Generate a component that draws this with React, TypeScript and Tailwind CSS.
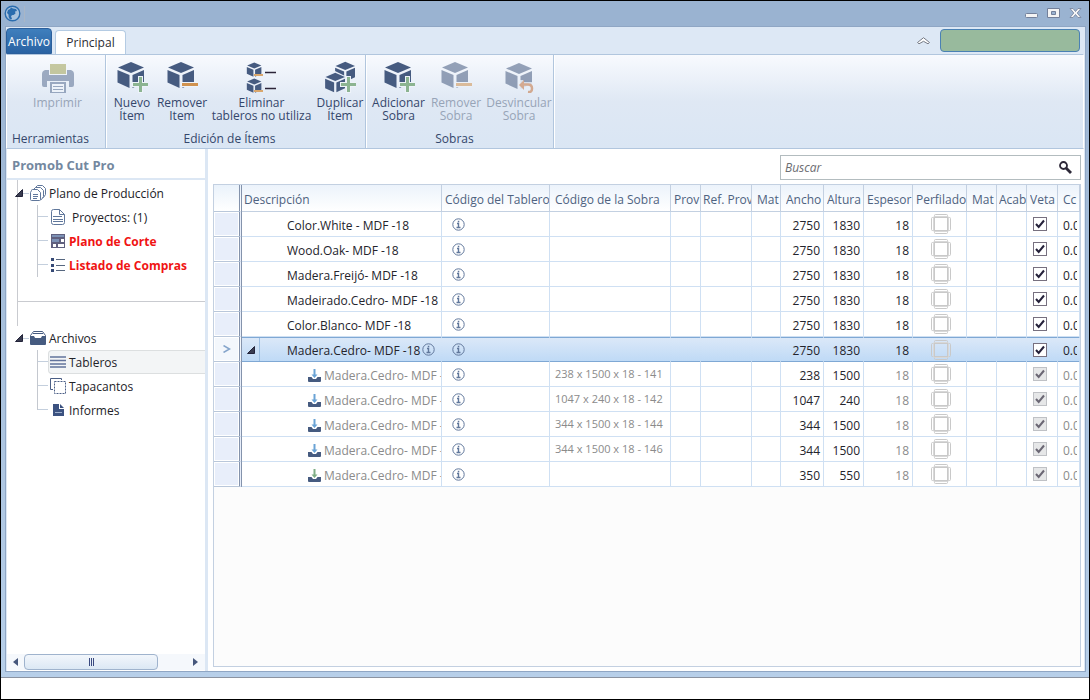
import React, { useState } from 'react';
import clsx from 'clsx';

interface IconProps {
  className?: string;
}

const Cube: React.FC<{ x?: number; y?: number; scale?: number }> = ({ x = 0, y = 0, scale = 1 }) => (
  <g transform={`translate(${x} ${y}) scale(${scale})`} fill="#465b80">
    <polygon points="15,1 28,6.5 15,12 2,6.5" />
    <polygon points="1.5,9 13.5,14 13.5,27 1.5,21.5" />
    <polygon points="16.5,14 28,9 28,21.5 16.5,27" />
  </g>
);

const Plus = () => (
  <>
    <path d="M22 15h5v6h6v5h-6v6h-5v-6h-6v-5h6z" fill="#eef3fa" />
    <path d="M23 16h3v6h6v3h-6v6h-3v-6h-6v-3h6z" fill="#8cb491" />
  </>
);

const PrintIcon = () => (
  <svg width="32" height="32" viewBox="0 0 32 32">
    <rect x="8" y="3" width="16" height="10" fill="#a0a255" />
    <path d="M3 9h4v5h18V9h4q3 1 3 4v11q0 2-2 2h-3v-6H5v6H2q-2 0-2-2V13q0-3 3-4z" fill="#5a6f93" />
    <path d="M9 22h14v10H9z" fill="#f4f7fc" stroke="#5a6f93" strokeWidth="2" />
    <path d="M11 25.500h10M11 28.500h10" stroke="#5a6f93" />
  </svg>
);

const CubeAddIcon = () => (
  <svg width="32" height="32" viewBox="0 0 32 32"><Cube /><Plus /></svg>
);

const CubeRemoveIcon = () => (
  <svg width="32" height="32" viewBox="0 0 32 32">
    <Cube />
    <path d="M15 21h17v5H15z" fill="#eef3fa" />
    <path d="M16 22h16v3H16z" fill="#d0924f" />
  </svg>
);

const CubeListIcon = () => (
  <svg width="32" height="32" viewBox="0 0 32 32">
    <Cube x={0} y={1} scale={0.55} />
    <Cube x={0} y={17} scale={0.55} />
    <path d="M8 13h9v2H8zM8 29h9v2H8z" fill="#d9a76d" />
    <path d="M19 11.500h11M19 27.500h11" stroke="#2c2438" strokeWidth="1.500" />
  </svg>
);

const CubeDuplicateIcon = () => (
  <svg width="32" height="32" viewBox="0 0 32 32">
    <Cube x={10} y={0} scale={0.75} />
    <path d="M0 16L11 10l12 6v10l-12 6-11-6z" fill="#eaf0f9" />
    <Cube x={0} y={11} scale={0.75} />
    <Plus />
  </svg>
);

const CubeUnlinkIcon = () => (
  <svg width="32" height="32" viewBox="0 0 32 32">
    <Cube x={1} y={1} />
    <path d="M17 19h3l1 2h9v11H17z" fill="#e6edf7" opacity="0.8" />
    <path d="M19 23.500h6q4 0 4 4t-4 3.500" fill="none" stroke="#c4733d" strokeWidth="2.500" />
    <path d="M16 24l5-5v10z" fill="#c4733d" />
  </svg>
);

const InfoIcon: React.FC<IconProps> = ({ className }) => (
  <svg width="13" height="13" viewBox="0 0 13 13" className={className}>
    <circle cx="6.500" cy="6.500" r="5.700" fill="none" stroke="#60779b" />
    <path d="M5 5.500h1.500v4M4.500 9.500h4M5.800 3.500h1.500" fill="none" stroke="#60779b" strokeWidth="1.400" />
  </svg>
);

const ImportIcon: React.FC<{ color: string }> = ({ color }) => (
  <svg width="13" height="14" viewBox="0 0 13 14" className="shrink-0">
    <path d="M0 8h3.500l1.500 2h3l1.500-2H13v4q0 1-1 1H1q-1 0-1-1z" fill="#465b80" />
    <path d="M5.500 0h2v5.500h2L6.500 9 3.500 5.500h2z" fill={color} />
  </svg>
);

const EdgeIcon = () => (
  <svg width="20" height="20" viewBox="0 0 20 20" className="ml-[18px] block" fill="none" stroke="#c9c9c9">
    <rect x="3.500" y="0.500" width="13" height="19" rx="1" />
    <rect x="0.500" y="3.500" width="19" height="13" rx="1" />
    <rect x="2.500" y="2.500" width="15" height="15" rx="1" stroke="#d8d8d8" />
  </svg>
);

const ExpanderIcon: React.FC<IconProps> = ({ className }) => (
  <svg width="8" height="8" viewBox="0 0 8 8" className={className}>
    <polygon points="7.500,0.500 7.500,7.500 0.500,7.500" fill="#3a3c50" stroke="#23243a" />
  </svg>
);

const SheetsIcon = () => (
  <svg width="16" height="17" viewBox="0 0 16 17" fill="#fff" stroke="#60779b">
    <path d="M5.500 2.500l2-2h5l3 3v6l-2 3h-8z" />
    <path d="M3.500 4.500l2-2h5l3 3v6l-2 3h-8z" />
    <path d="M1.500 5.500q0-1 1-1h5l3 3v7q0 1-1 1h-8q-1 0-1-1v-7z" />
    <path d="M3 9.500h5M3 11.500h5M3 13.500h4" />
  </svg>
);

const SheetIcon = () => (
  <svg width="16" height="16" viewBox="0 0 16 16" fill="none" stroke="#60779b">
    <path d="M1.500 2.500q0-2 2-2h6l5 5v8q0 2-2 2h-9q-2 0-2-2z" fill="#fff" />
    <path d="M9.500 0.500v5h5M3 7.500h9M3 10.500h10M3 12.500h10" />
  </svg>
);

const CutPlanIcon = () => (
  <svg width="16" height="16" viewBox="0 0 16 16">
    <rect x="1" y="1" width="14" height="14" fill="#60607e" />
    <path d="M2 3h12" stroke="#7c91b5" strokeWidth="2" />
    <path d="M11 6h3v3h-3zM3 11h3v3H3zM8 11h6v3H8z" fill="#fff" />
    <path d="M2 6h7v3H2z" fill="#7c91b5" />
  </svg>
);

const ListIcon = () => (
  <svg width="16" height="16" viewBox="0 0 16 16">
    <path d="M1 1h3v3H1zM1 7h3v3H1zM1 12h3v3H1z" fill="#364a76" />
    <path d="M6 2.500h9M6 8.500h9M6 13.500h9" stroke="#56667f" />
  </svg>
);

const DrawerIcon = () => (
  <svg width="16" height="14" viewBox="0 0 16 14">
    <path d="M3.500 0.500h9l3 4v3h-15v-3z" fill="#fff" stroke="#465b80" />
    <path d="M3 2.500h10" stroke="#465b80" />
    <path d="M0 5h4q1 3 4 3t4-3h4v8q0 1-1 1H1q-1 0-1-1z" fill="#465b80" />
  </svg>
);

const BoardsIcon = () => (
  <svg width="16" height="12" viewBox="0 0 16 12">
    <path d="M0 1h16M0 4.500h16M0 8h16M0 11h16" stroke="#63749c" strokeWidth="1.500" />
  </svg>
);

const EdgeBandIcon = () => (
  <svg width="16" height="16" viewBox="0 0 16 16" fill="none" stroke="#4b5f86">
    <path d="M11.500 2V0.500h-11v11H3" />
    <rect x="4.500" y="3.500" width="11" height="12" strokeDasharray="2 1" />
  </svg>
);

const ReportIcon = () => (
  <svg width="16" height="14" viewBox="0 0 16 14">
    <path d="M3 1h6v5h5v7H3z" fill="#3c5280" />
    <path d="M10 1l4 4h-4z" fill="#3c5280" />
    <path d="M5 9.500h7" stroke="#9fb0cc" />
  </svg>
);

const ribbonGroups = [
  {
    name: 'Herramientas',
    padding: 'pl-[3px]',
    buttons: [{ lines: ['Imprimir'], icon: <PrintIcon />, width: 'w-[95px]', disabled: true }],
  },
  {
    name: 'Edición de Ítems',
    padding: 'pl-0.5',
    buttons: [
      { lines: ['Nuevo', 'Ítem'], icon: <CubeAddIcon />, width: 'w-[48px]' },
      { lines: ['Remover', 'Item'], icon: <CubeRemoveIcon />, width: 'w-[52px]' },
      { lines: ['Eliminar', 'tableros no utiliza'], icon: <CubeListIcon />, width: 'w-[107px]' },
      { lines: ['Duplicar', 'Ítem'], icon: <CubeDuplicateIcon />, width: 'w-[50px]' },
    ],
  },
  {
    name: 'Sobras',
    padding: 'pl-1',
    buttons: [
      { lines: ['Adicionar', 'Sobra'], icon: <CubeAddIcon />, width: 'w-[57px]' },
      { lines: ['Remover', 'Sobra'], icon: <CubeRemoveIcon />, width: 'w-[58px]', disabled: true },
      { lines: ['Desvincular', 'Sobra'], icon: <CubeUnlinkIcon />, width: 'w-[68px]', disabled: true },
    ],
  },
];

const columns = [
  { label: 'Descripción', width: 'w-[200px]', margin: 'ml-0.5' },
  { label: 'Código del Tablero', width: 'w-[108px]', margin: 'ml-[3px]' },
  { label: 'Código de la Sobra', width: 'w-[121px]', margin: 'ml-[5px]' },
  { label: 'Prov', width: 'w-[30px]', margin: 'ml-[3px]' },
  { label: 'Ref. Prov', width: 'w-[51px]', margin: 'ml-0.5' },
  { label: 'Mat', width: 'w-[29px]', margin: 'ml-[5px]' },
  { label: 'Ancho', width: 'w-[43px]', margin: 'ml-[5px]' },
  { label: 'Altura', width: 'w-[40px]', margin: 'ml-[3px]' },
  { label: 'Espesor', width: 'w-[49px]', margin: 'ml-[3px]' },
  { label: 'Perfilado', width: 'w-[54px]', margin: 'ml-[3px]' },
  { label: 'Mat', width: 'w-[30px]', margin: 'ml-[5px]' },
  { label: 'Acab', width: 'w-[30px]', margin: 'ml-0.5' },
  { label: 'Veta', width: 'w-[31px]', margin: 'ml-[3px]' },
  { label: 'Cc', width: '', margin: 'ml-[5px]' },
];

interface Board {
  name: string;
  scrap?: string;
  width: number;
  height: number;
  kind: 'board' | 'selected' | 'scrap';
  arrow?: string;
}

const boards: Board[] = [
  { name: 'Color.White - MDF -18', width: 2750, height: 1830, kind: 'board' },
  { name: 'Wood.Oak- MDF -18', width: 2750, height: 1830, kind: 'board' },
  { name: 'Madera.Freijó- MDF -18', width: 2750, height: 1830, kind: 'board' },
  { name: 'Madeirado.Cedro- MDF -18', width: 2750, height: 1830, kind: 'board' },
  { name: 'Color.Blanco- MDF -18', width: 2750, height: 1830, kind: 'board' },
  { name: 'Madera.Cedro- MDF -18', width: 2750, height: 1830, kind: 'selected' },
  { name: 'Madera.Cedro- MDF -', scrap: '238 x 1500 x 18 - 141', width: 238, height: 1500, kind: 'scrap' },
  { name: 'Madera.Cedro- MDF -', scrap: '1047 x 240 x 18 - 142', width: 1047, height: 240, kind: 'scrap' },
  { name: 'Madera.Cedro- MDF -', scrap: '344 x 1500 x 18 - 144', width: 344, height: 1500, kind: 'scrap' },
  { name: 'Madera.Cedro- MDF -', scrap: '344 x 1500 x 18 - 146', width: 344, height: 1500, kind: 'scrap' },
  { name: 'Madera.Cedro- MDF -', width: 350, height: 550, kind: 'scrap', arrow: '#7fae86' },
];

const TitleBar = () => (
  <div className="flex h-[25px] shrink-0 items-center bg-[#9ab3d1] pl-[3px] pr-[7px]">
    <svg width="17" height="17" viewBox="0 0 17 17">
      <circle cx="8.500" cy="8.500" r="7.300" fill="#a9c3de" stroke="#2a6cae" strokeWidth="1.400" />
      <path d="M4 5l2-1 1-1.500 2 1 3 .500 1 2-2 .500.500 2-2 1.500H8.500L7 11l1 3-2 .500q-2-2-1.500-5L3 8z" fill="#2a6cae" />
    </svg>
    <span className="ml-[3px] h-4 w-px bg-[#a9b6c6]" />
    <div className="ml-auto flex items-center gap-[9px] pb-0.5">
      <button aria-label="Minimizar">
        <svg width="13" height="12" viewBox="0 0 13 12"><rect x="0.500" y="6.500" width="12" height="4" rx="1" fill="#f4f4f4" stroke="#73809a" /></svg>
      </button>
      <button aria-label="Maximizar">
        <svg width="13" height="12" viewBox="0 0 13 12">
          <path d="M0.500 1.500h12v9H0.500zM4.500 4.500v3h4v-3z" fillRule="evenodd" fill="#f4f4f4" stroke="#73809a" />
        </svg>
      </button>
      <button aria-label="Cerrar">
        <svg width="13" height="12" viewBox="0 0 13 12">
          <path d="M1 1.500h3l2.500 3 2.500-3h3L8.200 6l3.800 4.500H9l-2.500-3-2.500 3H1L4.800 6z" fill="#f6f6f6" stroke="#73809a" strokeWidth="0.800" />
        </svg>
      </button>
    </div>
  </div>
);

const TabRow = () => (
  <div className="flex h-[27px] shrink-0 items-end">
    <button className="flex h-[26px] w-[46px] items-center justify-center self-center rounded-t-sm border border-[#2b5f9c] bg-linear-to-b from-[#3f7fbd] to-[#2a63a3] pt-0.5 text-white">Archivo</button>
    <button className="ml-[3px] h-6 w-[71px] rounded-t-sm border border-b-0 border-[#b4cbe3] bg-white text-[#2b2b33]">Principal</button>
    <button aria-label="Minimizar la cinta" className="ml-auto self-center">
      <svg width="13" height="8" viewBox="0 0 13 8" fill="#fff" stroke="#767b86">
        <path d="M6.500 0.700l6 4.800-1.500 1.300-4.500-2.500-4.500 2.500L0.500 5.500z" />
      </svg>
    </button>
    <div className="ml-[10px] mr-1 h-[23px] w-[140px] self-center rounded-sm border border-[#4a81b4] bg-[#98ba9d]" />
  </div>
);

const Ribbon = () => (
  <div className="flex h-[95px] shrink-0 border border-[#b1c6de] border-x-white bg-linear-to-b from-[#f8fafe] via-[#dfe8f4] to-[#dae6f4]">
    {ribbonGroups.map((group) => (
      <div key={group.name} className={clsx('flex flex-col border-r border-[#b1c6de] shadow-[1px_0_0_#fff]', group.padding)}>
        <div className="flex grow items-start pt-1.5">
          {group.buttons.map((button) => (
            <button
              key={button.lines.join(' ')}
              disabled={button.disabled}
              className={clsx('flex flex-col items-center whitespace-nowrap leading-[13px]', button.width, button.disabled ? 'text-[#97a4b7]' : 'text-[#34466b]')}
            >
              <span className={button.disabled ? 'opacity-55' : ''}>{button.icon}</span>
              <span className="mt-[3px]">
                {button.lines.map((line) => (
                  <span key={line} className="block">{line}</span>
                ))}
              </span>
            </button>
          ))}
        </div>
        <div className="h-[17px] pr-[14px] text-center leading-4 text-[#34466b]">{group.name}</div>
      </div>
    ))}
  </div>
);

interface TreeItemProps {
  icon: React.ReactNode;
  label: string;
  last?: boolean;
  selected?: boolean;
  alert?: boolean;
  indent?: boolean;
}

const TreeItem: React.FC<TreeItemProps> = ({ icon, label, last, selected, alert, indent }) => (
  <li className="flex h-6">
    <span className={clsx('ml-[19px] w-[11px] shrink-0 border-l border-[#c4c8cf]', last && 'h-3')}>
      <span className="block h-3 border-b border-[#c4cfdd]" />
    </span>
    <a
      href="#"
      className={clsx(
        'flex grow items-center rounded-l-sm border border-r-0 pl-px',
        selected ? 'border-[#dcdfe0] bg-[#f3f5f6]' : 'border-transparent',
        alert ? 'font-bold text-[#f01414]' : 'text-[#222228]',
      )}
    >
      {icon}
      <span className={clsx('pt-0.5', indent ? 'ml-1.5' : 'ml-[3px]')}>{label}</span>
    </a>
  </li>
);

const TreeRoot: React.FC<{ icon: React.ReactNode; label: string }> = ({ icon, label }) => (
  <div className="-ml-1 flex h-6 items-center text-[#222228]">
    <ExpanderIcon className="ml-px" />
    <span className="mr-px w-1.5 border-t border-[#c4cfdd]" />
    {icon}
    <span className="ml-[3px] pt-0.5">{label}</span>
  </div>
);

const Sidebar = () => (
  <aside className="flex w-[201px] shrink-0 flex-col border-r-[3px] border-[#dce7f4] bg-white">
    <h1 className="h-[31px] shrink-0 border-b-2 border-[#dce7f4] pl-[5px] pt-px text-[13px] font-bold leading-[30px] text-[#74889f]">Promob Cut Pro</h1>
    <div className="grow pl-[10px]">
      <section className="border-b border-l border-[#c9cbd0] pb-6 pt-px">
        <TreeRoot icon={<SheetsIcon />} label="Plano de Producción" />
        <ul>
          <TreeItem icon={<SheetIcon />} label="Proyectos: (1)" indent />
          <TreeItem icon={<CutPlanIcon />} label="Plano de Corte" alert />
          <TreeItem icon={<ListIcon />} label="Listado de Compras" alert />
        </ul>
      </section>
      <div className="h-6 border-l border-[#c9cbd0]" />
      <section className="border-l border-transparent">
        <TreeRoot icon={<DrawerIcon />} label="Archivos" />
        <ul>
          <TreeItem icon={<BoardsIcon />} label="Tableros" selected />
          <TreeItem icon={<EdgeBandIcon />} label="Tapacantos" />
          <TreeItem icon={<ReportIcon />} label="Informes" last />
        </ul>
      </section>
    </div>
    <div className="mb-px flex h-4 shrink-0 items-center bg-[#f5f8fc]">
      <button aria-label="Desplazar a la izquierda" className="flex w-[17px] justify-center">
        <svg width="5" height="8" viewBox="0 0 5 8"><polygon points="5,0 5,8 0,4" fill="#46577c" /></svg>
      </button>
      <div className="flex h-4 w-[134px] items-center justify-center gap-px rounded-sm border border-[#9fb3cd] bg-linear-to-b from-[#f2f6fb] to-[#dce8f4]">
        <span className="h-2 w-px bg-[#3a4a80]" />
        <span className="h-2 w-px bg-[#3a4a80]" />
        <span className="h-2 w-px bg-[#3a4a80]" />
      </div>
      <button aria-label="Desplazar a la derecha" className="ml-auto flex w-[19px] justify-center">
        <svg width="5" height="8" viewBox="0 0 5 8"><polygon points="0,0 0,8 5,4" fill="#46577c" /></svg>
      </button>
    </div>
  </aside>
);

const VetaCheckbox: React.FC<{ disabled: boolean }> = ({ disabled }) => {
  const [checked, setChecked] = useState(true);
  return (
    <span className="grid w-[14px] place-items-center">
      <input
        type="checkbox"
        aria-label="Veta"
        checked={checked}
        disabled={disabled}
        onChange={() => setChecked(!checked)}
        className={clsx(
          'col-start-1 row-start-1 size-[14px] appearance-none border',
          disabled ? 'border-[#bfc1c5] bg-[#e6e7e8]' : 'border-[#77707f] bg-white',
        )}
      />
      {checked && (
        <svg width="10" height="10" viewBox="0 0 10 10" className="pointer-events-none col-start-1 row-start-1">
          <path d="M1 5l2.700 3L9 1.500" fill="none" stroke={disabled ? '#6b6774' : '#25213a'} strokeWidth="2" />
        </svg>
      )}
    </span>
  );
};

const BoardRow: React.FC<{ board: Board }> = ({ board }) => {
  const selected = board.kind === 'selected';
  const scrap = board.kind === 'scrap';
  const cell = selected
    ? 'overflow-hidden border-y border-r border-[#7fa8d4] border-r-transparent bg-linear-to-b from-[#dbe8f8] to-[#bfdaf6] p-0'
    : 'overflow-hidden border-b border-r border-[#cfe0f3] p-0';
  const muted = scrap ? 'text-[#8b8b8b]' : 'text-[#24242c]';
  const number = 'pr-[3px] pt-[3px] text-right';

  return (
    <tr className="h-[25px]">
      <td
        className={clsx(
          'border-b border-r-[3px] border-[#b9c7da] border-r-[#8493ac] p-0 text-center shadow-[inset_0_0_0_1px_#fff] [border-right-style:double]',
          selected ? 'bg-[#f3f7fc]' : 'bg-[#e8eefa]',
        )}
      >
        {selected && (
          <svg width="8" height="8" viewBox="0 0 8 8" className="ml-[9px]">
            <path d="M0.500 0.500l6 3.500-6 3.500" fill="none" stroke="#85a5cb" strokeWidth="1.500" />
          </svg>
        )}
      </td>
      <td className={clsx(cell, selected && 'border-r-[#7fa8d4]')}>
        <div className={clsx('flex items-center overflow-hidden whitespace-nowrap', muted)}>
          {selected && (
            <button aria-label="Contraer" className="-mr-[18px] flex h-[23px] w-[18px] items-center justify-center border-r border-[#9dbfe2]">
              <ExpanderIcon />
            </button>
          )}
          {scrap ? (
            <span className="ml-[66px] flex items-center gap-[3px] pt-[3px]">
              <ImportIcon color={board.arrow || '#6aa3d5'} />
              {board.name}
            </span>
          ) : (
            <span className="ml-[45px] pt-[3px]">{board.name}</span>
          )}
          {selected && <InfoIcon className="ml-0.5 shrink-0" />}
        </div>
      </td>
      <td className={cell}>
        <InfoIcon className="ml-[10px] block" />
      </td>
      <td className={cell}><div className={clsx('whitespace-nowrap pl-[5px] text-[11px]', muted)}>{board.scrap}</div></td>
      <td className={cell} />
      <td className={cell} />
      <td className={cell} />
      <td className={cell}><div className={number}>{board.width}</div></td>
      <td className={cell}><div className={number}>{board.height}</div></td>
      <td className={cell}><div className={clsx(number, muted)}>18</div></td>
      <td className={cell}><EdgeIcon /></td>
      <td className={cell} />
      <td className={cell} />
      <td className={cell}><div className="pl-1.5"><VetaCheckbox disabled={scrap} /></div></td>
      <td className={cell}><div className={clsx('ml-[5px] mr-0.5 overflow-hidden pt-[3px]', muted)}>0.0</div></td>
    </tr>
  );
};

const BoardTable = () => (
  <table className="w-full table-fixed border-separate border-spacing-0 bg-white text-[#24242c]">
    <thead>
      <tr className="h-[27px] text-left text-[#4e6280]">
        <th
          aria-label="Fila"
          className="w-[28px] border-b border-r-[3px] border-[#b9c7da] border-r-[#8493ac] bg-linear-to-b from-[#eaf2fb] to-white p-0 [border-right-style:double]"
        />
        {columns.map((column, index) => (
          <th key={index} className={clsx('border-b border-r border-[#c3d0e1] bg-linear-to-b from-[#ecf3fb] to-white p-0 font-normal', column.width)}>
            <div className={clsx('overflow-hidden whitespace-nowrap pt-1', column.margin)}>{column.label}</div>
          </th>
        ))}
      </tr>
    </thead>
    <tbody>
      {boards.map((board, index) => (
        <BoardRow key={index} board={board} />
      ))}
    </tbody>
  </table>
);

const SearchBox = () => (
  <div className="ml-auto flex h-[25px] w-[301px] shrink-0 items-center border border-[#b3bcbf] bg-white">
    <input type="text" placeholder="Buscar" aria-label="Buscar" className="min-w-0 grow pl-1 italic outline-none placeholder:text-[#6d6d72]" />
    <button aria-label="Iniciar búsqueda" className="mr-2">
      <svg width="13" height="13" viewBox="0 0 13 13" fill="none" stroke="#2d2838">
        <circle cx="4.500" cy="4.500" r="3.500" strokeWidth="1.800" />
        <path d="M7 7l5 5" strokeWidth="2.800" />
      </svg>
    </button>
  </div>
);

const App = () => {
  return (
    <div className="flex h-screen flex-col border border-black bg-white pb-[21px] font-['Open_Sans','Noto_Sans',sans-serif] text-[12px] leading-4">
      <div className="flex min-h-0 grow flex-col border-b border-[#8b93a1] bg-linear-to-b from-[#9ab3d1] to-[#b7cfe9]">
        <TitleBar />
        <div className="mb-[5px] ml-1 mr-[3px] flex min-h-0 grow flex-col border border-[#8fa6c4] bg-[#dde8f5] pr-px">
          <TabRow />
          <Ribbon />
          <main className="flex min-h-0 grow pl-px">
            <Sidebar />
            <div className="flex min-w-0 grow flex-col bg-white pb-1 pl-[5px] pr-[3px] pt-[6px]">
              <SearchBox />
              <div className="mt-1 min-h-0 grow overflow-hidden border border-[#c3d0e1] bg-[#fcfcfc]">
                <BoardTable />
              </div>
            </div>
          </main>
        </div>
      </div>
    </div>
  );
};

export default App;
